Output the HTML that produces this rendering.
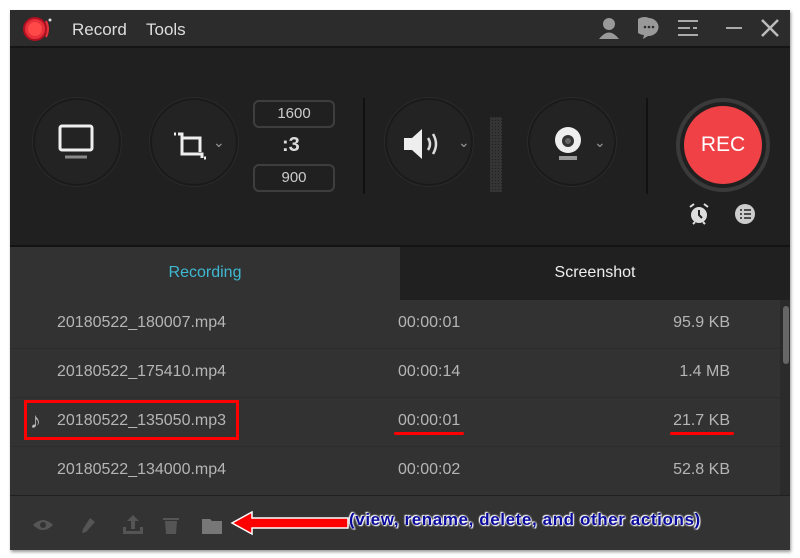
<!DOCTYPE html>
<html><head><meta charset="utf-8"><style>
*{margin:0;padding:0;box-sizing:border-box}
body{width:800px;height:558px;background:#fff;position:relative;overflow:hidden;font-family:"Liberation Sans",sans-serif}
.win{position:absolute;left:10px;top:10px;width:780px;height:540px;background:#202020;box-shadow:1px 2px 3px #999}
.a{position:absolute}
.title{left:0;top:0;width:780px;height:38px;background:#2c2c2c;border-bottom:2px solid #151515}
.menu{color:#ddd;font-size:17px;top:10px}
.circ{border-radius:50%;border:2px solid #1a1a1a;background:#232323;box-shadow:0 0 0 1px #2a2a2a}
.box{border:2px solid #3e3e3e;border-radius:6px;color:#ccc;font-size:15px;text-align:center;line-height:24px;width:82px;height:28px}
.chev{color:#999;font-size:14px}
.row{left:0;width:770px;height:49px;border-bottom:1px solid #2c2c2c;color:#b5b5b5;font-size:16px}
.row span{position:absolute;top:14px}
.row .r{right:50px;text-align:right}
</style></head><body>
<div class="win">
 <div class="a title">
  <svg class="a" style="left:12px;top:6px" width="32" height="26"><circle cx="13" cy="13" r="11" fill="#e8303a" stroke="#b01020" stroke-width="2"/><circle cx="13" cy="13" r="7" fill="#ff4848"/><path d="M24 5 Q28 13 24 21" stroke="#e8303a" stroke-width="2" fill="none"/><circle cx="28" cy="4" r="1.5" fill="#ddd"/></svg>
  <div class="a menu" style="left:62px">Record</div>
  <div class="a menu" style="left:136px">Tools</div>
  <svg class="a" style="left:588px;top:6px" width="22" height="24"><circle cx="11" cy="8" r="6" fill="#999"/><path d="M1 23 Q11 10 21 23Z" fill="#999"/></svg>
  <svg class="a" style="left:628px;top:7px" width="22" height="22"><path d="M11 1a10 9 0 1 0 -5 17l-1 4 5-3a10 9 0 0 0 1-18z" fill="#999"/><circle cx="7" cy="10" r="1.3" fill="#2c2c2c"/><circle cx="11" cy="10" r="1.3" fill="#2c2c2c"/><circle cx="15" cy="10" r="1.3" fill="#2c2c2c"/></svg>
  <svg class="a" style="left:667px;top:9px" width="22" height="18" stroke="#aaa" stroke-width="2"><path d="M1 2h20M1 9h12M16 9h4M1 16h20"/></svg>
  <svg class="a" style="left:715px;top:9px" width="18" height="18" stroke="#aaa" stroke-width="2"><path d="M1 9h16"/></svg>
  <svg class="a" style="left:750px;top:8px" width="20" height="20" stroke="#bbb" stroke-width="2.5"><path d="M2 2l16 16M18 2L2 18"/></svg>
 </div>
 <div class="a circ" style="left:23px;top:88px;width:88px;height:88px"></div>
 <svg class="a" style="left:46px;top:114px" width="40" height="38" fill="none" stroke="#eee" stroke-width="3"><rect x="4" y="2" width="32" height="24" rx="2"/><path d="M9 33h22" stroke="#888"/></svg>
 <div class="a circ" style="left:140px;top:88px;width:88px;height:88px"></div>
 <svg class="a" style="left:162px;top:118px" width="44" height="36" fill="none" stroke="#eee" stroke-width="3"><path d="M6 6h4v20h20v4M10 10h18v14"/><path d="M2 6h2M32 30h2"/></svg>
 <div class="a chev" style="left:203px;top:124px">&#8964;</div>
 <div class="a box" style="left:243px;top:90px">1600</div>
 <div class="a" style="left:272px;top:124px;color:#ddd;font-size:20px;font-weight:bold">:3</div>
 <div class="a box" style="left:243px;top:154px">900</div>
 <div class="a" style="left:353px;top:88px;width:2px;height:96px;background:#111"></div>
 <div class="a circ" style="left:375px;top:88px;width:88px;height:88px"></div>
 <svg class="a" style="left:392px;top:116px" width="44" height="36"><path d="M2 12h8l10-9v30l-10-9H2z" fill="#eee"/><path d="M26 12q4 6 0 12M31 8q6 10 0 20" stroke="#ddd" stroke-width="2.5" fill="none"/></svg>
 <div class="a chev" style="left:448px;top:124px">&#8964;</div>
 <div class="a" style="left:480px;top:107px;width:12px;height:75px;background:repeating-linear-gradient(90deg,#3a3a3a 0 2px,transparent 2px 3px),repeating-linear-gradient(0deg,#3a3a3a 0 2px,#222 2px 3px);opacity:.8"></div>
 <div class="a circ" style="left:518px;top:88px;width:88px;height:88px"></div>
 <svg class="a" style="left:540px;top:114px" width="36" height="40"><circle cx="18" cy="16" r="13" fill="#eee"/><circle cx="18" cy="17" r="6" fill="#333"/><circle cx="18" cy="17" r="3" fill="#666"/><path d="M9 32h18v4H9z" fill="#999"/></svg>
 <div class="a chev" style="left:584px;top:124px">&#8964;</div>
 <div class="a" style="left:636px;top:88px;width:2px;height:96px;background:#111"></div>
 <div class="a" style="left:666px;top:88px;width:94px;height:94px;border-radius:50%;border:4px solid #3a3a3a"></div>
 <div class="a" style="left:674px;top:96px;width:78px;height:78px;border-radius:50%;background:#ef4146;color:#fff;font-size:21px;text-align:center;line-height:78px">REC</div>
 <svg class="a" style="left:678px;top:192px" width="22" height="24"><circle cx="11" cy="13" r="8" fill="#ddd"/><path d="M11 8v5l3 3" stroke="#222" stroke-width="2" fill="none"/><path d="M2 5l4-3M20 5l-4-3M5 22l2-2M17 22l-2-2" stroke="#ddd" stroke-width="2"/></svg>
 <svg class="a" style="left:724px;top:193px" width="22" height="22"><circle cx="11" cy="11" r="10" fill="#ccc"/><path d="M6 7h2M10 7h7M6 11h2M10 11h7M6 15h2M10 15h7" stroke="#222" stroke-width="1.6"/></svg>
 <div class="a" style="left:0;top:235px;width:780px;height:2px;background:#131313"></div>
 <div class="a" style="left:0;top:237px;width:390px;height:53px;background:#323232;color:#3fb8d2;font-size:16px;text-align:center;line-height:52px">Recording</div>
 <div class="a" style="left:390px;top:237px;width:390px;height:53px;background:#202020;color:#eee;font-size:16px;text-align:center;line-height:52px">Screenshot</div>
 <div class="a" style="left:0;top:290px;width:770px;height:195px;background:#323232"></div>
 <div class="a" style="left:770px;top:290px;width:10px;height:195px;background:#2b2b2b"></div>
 <div class="a" style="left:773px;top:296px;width:6px;height:58px;background:#666;border-radius:3px"></div>
 <div class="a row" style="top:290px"><span style="left:47px">20180522_180007.mp4</span><span style="left:388px">00:00:01</span><span class="r">95.9 KB</span></div>
 <div class="a row" style="top:339px"><span style="left:47px">20180522_175410.mp4</span><span style="left:388px">00:00:14</span><span class="r">1.4 MB</span></div>
 <div class="a row" style="top:388px"><span style="left:47px">20180522_135050.mp3</span><span style="left:388px">00:00:01</span><span class="r">21.7 KB</span><span style="left:20px;top:10px;font-size:22px;color:#bbb">&#9834;</span></div>
 <div class="a row" style="top:437px;border:none"><span style="left:47px">20180522_134000.mp4</span><span style="left:388px">00:00:02</span><span class="r">52.8 KB</span></div>
 <div class="a" style="left:14px;top:390px;width:215px;height:40px;border:3px solid #f00"></div>
 <div class="a" style="left:384px;top:422px;width:70px;height:3px;background:#f00;border-radius:2px"></div>
 <div class="a" style="left:660px;top:422px;width:64px;height:3px;background:#f00;border-radius:2px"></div>
 <div class="a" style="left:0;top:486px;width:780px;height:54px;background:#333"></div>
 <svg class="a" style="left:20px;top:502px" width="210" height="24" fill="#555"><path d="M3 13q10-10 20 0q-10 10-20 0z"/><circle cx="13" cy="13" r="3" fill="#333"/><path d="M60 6l5 4-9 10-4 1 1-4z"/><path d="M93 22h20v-7h-3v4h-14v-4h-3zM103 3l-6 6h4v8h4v-8h4z"/><path d="M133 6h16v2h-16zM135 9h12l-1 13h-10z"/><path d="M172 7h8l2 2h10v13h-20z" fill="#777"/></svg>
 <svg class="a" style="left:220px;top:500px" width="120" height="26"><path d="M2 13L22 2v6h96v10H22v6z" fill="#f00" stroke="#fff" stroke-width="1.5"/></svg>
 <div class="a" style="left:339px;top:500px;color:#0a0a9a;font-size:17px;font-weight:bold;letter-spacing:0.6px;white-space:nowrap;text-shadow:0 0 2px #fff,0 0 2px #fff,1px 1px 1px #fff,-1px -1px 1px #fff">(view, rename, delete, and other actions)</div>
</div>
</body></html>
